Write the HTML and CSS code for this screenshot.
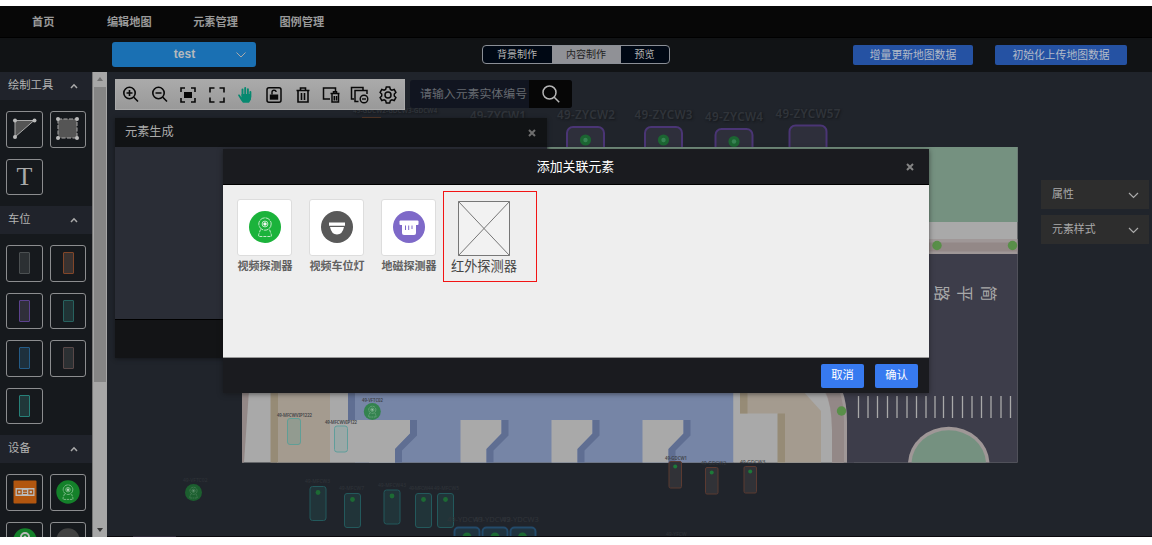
FILE: index.html
```html
<!DOCTYPE html>
<html lang="zh-CN">
<head>
<meta charset="utf-8">
<title>编辑地图</title>
<link rel="stylesheet" href="styles.css">
</head>
<body>
<svg class="defs" width="0" height="0">
  <defs>
    <g id="camera" fill="none" stroke="#e8f5e9" stroke-width=".8">
      <circle cx="0" cy="-3" r="6.200" stroke-dasharray="5 .8"/><circle cx="0" cy="-3" r="2.900"/><circle cx="0" cy="-3" r="1.300" fill="#fff"/>
      <path d="M-4.500 2.500 L-6.300 7.500 V9.500 H6.300 V7.500 L4.500 2.500" stroke-dasharray="3 1"/>
    </g>
    <g id="bay"><rect x="0" y="0" width="16" height="34" rx="2.5" fill="#213439" stroke="#23595c"/><circle cx="8" cy="6" r="2.4" fill="#1d6a34"/></g>
    <g id="bayBrown"><rect x="0" y="0" width="12.5" height="26.5" rx="1.5" fill="#313237" stroke="#5b3a31"/><circle cx="6.2" cy="5" r="2" fill="#1d7a38"/></g>
    <g id="slotPurple"><rect x="0" y="0" width="37" height="50" rx="6" fill="#2e2f3b" stroke="#4a3575" stroke-width="2"/></g>
    <g id="dot"><circle r="5.6" fill="#1c6532"/><circle r="2.2" fill="#388353"/></g>
    <g id="notch"><path d="M0 0H41V13.5L26 29V42.500H0Z" fill="#a9a9a9"/><path d="M41 0H48V15.500L33 30.500V42.500H26V29L41 13.500Z" fill="#5f6e92"/></g>
  </defs>
</svg>
<div class="app">
  <nav class="nav"><a class="home">首页</a><a>编辑地图</a><a>元素管理</a><a>图例管理</a></nav>
  <header class="subbar">
    <div class="select"><span>test</span><svg width="12" height="8" viewBox="0 0 12 8"><path d="M1.500 1.500 6 6l4.500-4.500"/></svg></div>
    <div class="tabs"><span class="tab first">背景制作</span><span class="tab active">内容制作</span><span class="tab last">预览</span></div>
    <div class="actions"><button class="update">增量更新地图数据</button><button class="upload">初始化上传地图数据</button></div>
  </header>
  <div class="workspace">
    <aside class="side">
      <h3>绘制工具<svg width="8" height="6" viewBox="0 0 8 6"><path d="M1 5 4 1.800 7 5"/></svg></h3>
      <div class="grid">
        <div class="tool"><svg width="36" height="36" viewBox="0 0 36 36"><path d="M8 9.500H27L8 26Z" fill="#555" stroke="#aaa"/><g fill="#bbb"><circle cx="8" cy="9.500" r="2"/><circle cx="27.500" cy="9.500" r="2"/><circle cx="8" cy="26" r="2"/></g></svg></div>
        <div class="tool"><svg width="36" height="36" viewBox="0 0 36 36"><rect x="8" y="8" width="19" height="19" fill="#555" stroke="#aaa" stroke-dasharray="4 1.500"/><g fill="#bbb"><circle cx="8" cy="8" r="2"/><circle cx="27" cy="8" r="2"/><circle cx="8" cy="27" r="2"/><circle cx="27" cy="27" r="2"/></g></svg></div>
        <div class="tool letter">T</div>
      </div>
      <h3>车位<svg width="8" height="6" viewBox="0 0 8 6"><path d="M1 5 4 1.800 7 5"/></svg></h3>
      <div class="grid">
        <div class="tool"><i class="slot gray"></i></div><div class="tool"><i class="slot orange"></i></div>
        <div class="tool"><i class="slot purple"></i></div><div class="tool"><i class="slot teal"></i></div>
        <div class="tool"><i class="slot azure"></i></div><div class="tool"><i class="slot brown"></i></div>
        <div class="tool"><i class="slot aqua"></i></div>
      </div>
      <h3>设备<svg width="8" height="6" viewBox="0 0 8 6"><path d="M1 5 4 1.800 7 5"/></svg></h3>
      <div class="grid">
        <div class="tool"><svg width="24" height="24" viewBox="0 0 24 24"><rect x=".5" y=".5" width="23" height="23" rx="1" fill="#b2560f"/><path fill="#bbb" d="M2.500 8h19v8h-19z"/><g fill="none" stroke="#a6500f" stroke-width="1.300"><rect x="4.500" y="10.200" width="3.600" height="3.600"/><rect x="16" y="10.200" width="3.600" height="3.600"/><path d="M10 11H14M10 13.300H14"/></g></svg></div>
        <div class="tool"><svg width="24" height="24" viewBox="-12 -12 24 24"><circle r="11.700" fill="#14812a"/><use href="#camera" transform="scale(.78)" opacity=".75"/></svg></div>
        <div class="tool"><svg width="24" height="24" viewBox="-12 -12 24 24"><circle r="11.700" fill="#14812a"/><circle cy="-3" r="4" fill="none" stroke="#bbb" stroke-width="2"/><circle cy="-3" r="1.500" fill="#bbb"/></svg></div>
        <div class="tool"><svg width="24" height="24" viewBox="-12 -12 24 24"><circle r="11.700" fill="#414141"/></svg></div>
      </div>
    </aside>
    <div class="scroll"><b class="up"></b><div class="thumb"></div><b class="down"></b></div>
    <main class="canvas">
      <svg class="map" width="1045" height="465" viewBox="107 72 1045 465">
        <g class="label shade"><text x="353" y="113" font-size="6.500">49-GDCW2-GDCW3-GDCW4</text><text x="470" y="119.500">49-ZYCW1</text><text x="557" y="119" textLength="58">49-ZYCW2</text><text x="634.500" y="119" textLength="58">49-ZYCW3</text><text x="705" y="121" textLength="58">49-ZYCW4</text><text x="775.500" y="117.500" textLength="65">49-ZYCW57</text></g>
        <path d="M362 118h19" stroke="#5d3b27" stroke-width="2"/>
        <use href="#slotPurple" x="567" y="127"/><use href="#slotPurple" x="645" y="127"/><use href="#slotPurple" x="715.500" y="129"/><use href="#slotPurple" x="789.500" y="125.500"/>
        <use href="#dot" x="585.500" y="140"/><use href="#dot" x="663.500" y="140"/><use href="#dot" x="734" y="141.500"/>
        <rect x="242" y="147" width="775.500" height="315.500" fill="#a9a9a9"/>
        <rect x="242" y="147" width="775.500" height="75" fill="#759180"/>
        <path fill="#9f9797" d="M900 239h117.500v15H900z"/><path fill="#938887" d="M900 242.500h117.500v9H900z"/>
        <path fill="#3d3d4a" d="M847 254h170.500v208.500H847z"/>
        <circle cx="937" cy="245.500" r="4.700" fill="#598f49"/><circle cx="1012.500" cy="245.500" r="4.700" fill="#598f49"/>
        <path fill="#938887" d="M242 390h7l-5 72.500h-2z"/>
        <path fill="#a49b8f" d="M277 390h53v72.500h-53z"/><path fill="#968b76" d="M270.500 390h7.500v72.500h-7.500z"/>
        <path fill="#7685a6" d="M355 390h378.500v72.500H355z"/><path fill="#a9a9a9" d="M330 390h18v30h62v13.500l-15 15.500v13.500h-65z"/><path fill="#5f6e92" d="M348 390h7v30h-7z"/>
        <use href="#notch" x="369" y="420"/><use href="#notch" x="460.500" y="420"/><use href="#notch" x="551.500" y="420"/><use href="#notch" x="642.500" y="420"/>
        <path fill="#a9a9a9" d="M733.500 390h110v72.500h-110z"/>
        <path fill="#a49b8f" d="M740 390h62l19 21v51.500h-43V413.500h-38z"/><path fill="#968b76" d="M740 390h7.500v23.500H740zM777.500 413.500h7.500v49h-7.500z"/>
        <path fill="#9f9797" d="M820 390h22q5 13 5 32v40.500h-15V430q0-25-8-40z"/><path fill="#938887" d="M825 390h14q5 13 5 32v40.500h-12V430q0-25-7-40z"/>
        <path fill="#3d3d4a" d="M842 390h12v72.500h-7V422q0-19-5-32z"/>
        <circle cx="841.500" cy="411" r="4.700" fill="#598f49"/>
        <path class="ticks" d="M858.500 396v22M868 396v22M877.500 396v22M887.500 396v22M897 396v22M907 396v22M916.500 396v22M926 396v22M935 396v22M943.500 396v22M952.500 396v22M962.500 396v22M972 396v22M981.500 396v22M991 396v22M1001 396v22M1010.500 396v22"/>
        <path d="M908 462.500a40.800 37.500 0 0 1 81.500 0" fill="#9f9797"/><path d="M911.500 462.500a37.300 34 0 0 1 74.500 0" fill="#759180"/>
        <g class="road"><text transform="translate(936 285.500) rotate(90)">路</text><text transform="translate(959 285.500) rotate(90)">平</text><text transform="translate(983 285.500) rotate(90)">简</text></g>
        <g class="label tiny"><text x="277" y="416.500" textLength="35">49-MFCWVIP1222</text><text x="325" y="423.500" textLength="32">49-MFCWVIP122</text><text x="362" y="401.500" textLength="21">49-VFTC02</text><text x="665" y="459.500" textLength="22">49-GDCW1</text></g>
        <rect x="287.500" y="418.500" width="13" height="26" rx="2.500" fill="#929b90" stroke="#609e96"/><rect x="334.500" y="426" width="13" height="26" rx="2.500" fill="#9ba8a7" stroke="#609e9b"/>
        <circle cx="372.300" cy="411.500" r="8.500" fill="#34834f"/><use href="#camera" transform="translate(372.300 411.500) scale(.58)" opacity=".55"/>
        <circle cx="193.500" cy="492.500" r="8.500" fill="#1c5f2f"/><use href="#camera" transform="translate(193.500 492.500) scale(.58)" opacity=".35"/>
        <use href="#bay" x="310" y="486.500"/><use href="#bay" x="344.500" y="493.500"/><use href="#bay" x="384" y="490"/><use href="#bay" x="415.500" y="493.500"/><use href="#bay" x="437.500" y="493.500"/>
        <use href="#bayBrown" x="669" y="461.500"/><use href="#bayBrown" x="705.500" y="467.500"/><use href="#bayBrown" x="744" y="466.500"/>
        <g class="label faint"><text x="305" y="483">49-MFCW3</text><text x="339" y="490">49-MFCW7</text><text x="378" y="486.500">49-MFCW43</text><text x="409" y="490" textLength="24">49-MFCW44</text><text x="434" y="490" textLength="25">49-MFCW5</text><text x="183" y="482">49-VFTC02</text><text x="701" y="465">49-GDCW2</text><text x="740" y="464">49-GDCW3</text><text x="666" y="536">49-YFCW</text></g>
        <g class="label ydc"><text x="447" y="521.500">49-YDCW1</text><text x="474" y="521.500">49-YDCW2</text><text x="502" y="521.500">49-YDCW3</text></g>
        <g fill="#20333f" stroke="#234b6b" stroke-width="2"><rect x="454.500" y="527.500" width="25" height="30" rx="4"/><rect x="482.500" y="527.500" width="25" height="30" rx="4"/><rect x="510.500" y="527.500" width="25" height="30" rx="4"/></g>
        <g fill="#1d6a34"><circle cx="467" cy="537" r="4.500"/><circle cx="495" cy="537" r="4.500"/><circle cx="522.500" cy="537" r="4.500"/></g>
        <path d="M107 536.500H1152" stroke="#0a080c"/><path d="M133 536.500h43" stroke="#302938"/>
      </svg>
      <div class="top-tools">
        <div class="toolbar">
          <svg viewBox="0 0 20 20"><circle cx="8.500" cy="8" r="5.700"/><path d="M12.800 12.200 17 16.500M5.500 8h6M8.500 5v6"/></svg>
          <svg viewBox="0 0 20 20"><circle cx="8.500" cy="8" r="5.700"/><path d="M12.800 12.200 17 16.500M5.500 8h6"/></svg>
          <svg viewBox="0 0 20 20"><path d="M7 3H3v4M13 3h4v4M3 13v4h4M17 13v4h-4"/><path class="solid" d="M6 7h8v6H6z"/></svg>
          <svg viewBox="0 0 20 20"><path d="M7.500 3H3v4.500M12.500 3H17v4.500M3 12.500V17h4.500M17 12.500V17h-4.500"/></svg>
          <svg class="hand" viewBox="0 0 20 20"><path d="M7.500 11V4.500M10.200 10V3M12.900 11V4.200M15.400 12V7"/><path class="palm" d="M6.500 9V12.500L4.700 9.800C4 9 2.700 9.600 3.300 10.800L6.200 15.500 8 17.800H14L16 14.500V9Z"/></svg>
          <svg viewBox="0 0 20 20"><rect x="3" y="2.800" width="14" height="14.500" rx="2" stroke-width="1.500"/><path class="solid" d="M5.800 9.500h8.400v5.200H5.800z"/><path d="M8 9.500V7.200q0-2 2-2t2.200 1.800" stroke-width="1.400"/></svg>
          <svg viewBox="0 0 20 20"><path d="M3.500 5.500h13M7.500 5V3h5v2M5 6v11h10V6M8.500 8v7M11.500 8v7"/></svg>
          <svg viewBox="0 0 20 20"><path d="M9 14H2.500V3h12v3M9.500 8.500h9M12.500 8V6.800h3V8M11 9v8h6.500V9M13.300 11v4.500M15.500 11v4.500" stroke-width="1.500"/></svg>
          <svg viewBox="0 0 20 20"><path d="M4 14H1.500V2.500H13V5M8.500 16.500H5V5.500h12V9" stroke-width="1.500"/><circle cx="14" cy="14" r="3.800" stroke-width="1.400"/><path d="M12 14h4" stroke-width="1.400"/></svg>
          <svg viewBox="0 0 20 20"><path d="M8.300 2h3.400l.7 2.400 1.500.8 2.300-.7 1.700 2.900-1.600 1.700v1.800l1.600 1.700-1.700 2.900-2.300-.7-1.500.8-.7 2.400H8.300l-.7-2.400-1.500-.8-2.300.7-1.700-2.900 1.600-1.700V9.100L2.100 7.400l1.700-2.900 2.300.7 1.500-.8Z" stroke-width="1.500"/><circle cx="10" cy="10" r="3" stroke-width="1.500"/></svg>
        </div>
        <div class="search"><span>请输入元素实体编号</span><div class="go"><svg width="20" height="20" viewBox="0 0 20 20"><circle cx="8.500" cy="8.500" r="6.500"/><path d="m13.200 13.200 5 5"/></svg></div></div>
      </div>
      <section class="panel"><div class="panel-head"><span>元素生成</span><svg width="8" height="8" viewBox="0 0 8 8"><path d="m1 1 6 6M7 1 1 7"/></svg></div><div class="panel-body"></div><div class="panel-foot"></div></section>
      <div class="props"><div>属性<svg width="11" height="7" viewBox="0 0 11 7"><path d="m1 1 4.500 4.500L10 1"/></svg></div><div>元素样式<svg width="11" height="7" viewBox="0 0 11 7"><path d="m1 1 4.500 4.500L10 1"/></svg></div></div>
    </main>
  </div>
  <section class="dialog">
    <div class="dialog-head"><span>添加关联元素</span><svg width="8" height="8" viewBox="0 0 8 8"><path d="m1 1 6 6M7 1 1 7"/></svg></div>
    <div class="dialog-body">
      <div class="item"><div class="card"><svg width="32" height="32" viewBox="-16 -16 32 32"><circle r="16" fill="#1bb33b"/><use href="#camera"/></svg></div><span>视频探测器</span></div>
      <div class="item"><div class="card"><svg width="32" height="32" viewBox="-16 -16 32 32"><circle r="16" fill="#595959"/><path fill="#fff" d="M-8-4.500H8V-1.200H-8ZM-7 0H7Q5.500 7.500 0 7.500-5.500 7.500-7 0Z"/></svg></div><span>视频车位灯</span></div>
      <div class="item"><div class="card"><svg width="32" height="32" viewBox="-16 -16 32 32"><circle r="16" fill="#7e69c8"/><rect x="-9.500" y="-6.500" width="19" height="4.500" rx="1" fill="#fff"/><path fill="#fff" d="M-7-2.200H7V6q0 2-2 2H-5q-2 0-2-2Z"/><path d="M-3.500-1.500V3M-.3-1.500V3M3-1.500V2" stroke="#7e69c8"/></svg></div><span>地磁探测器</span></div>
      <div class="missing"><svg width="52" height="55" viewBox="0 0 52 55"><path d="M.5.500h51v54H.500ZM.500.500l51 54M51.500.500l-51 54"/></svg><span>红外探测器</span></div>
    </div>
    <div class="dialog-foot"><button>取消</button><button>确认</button></div>
  </section>
</div>
</body>
</html>
```
FILE: styles.css
```css
* { box-sizing: border-box; }
body { margin: 0; padding-top: 6px; height: 545px; overflow: hidden; background: #fff; font: 11px/1.2 "Liberation Sans", "Noto Sans CJK SC", sans-serif; color: #aaa; }
svg { display: block; flex: none; }
.defs { position: absolute; }
button { border: 0; padding: 1px 0 0; font: inherit; }
.app { position: relative; height: 531px; overflow: hidden; background: #20242b; }
.nav { height: 32px; display: flex; align-items: center; gap: 41.5px; padding: 2px 0 0 32px; background: #070707; border-bottom: 1px solid #000; font-weight: 700; font-size: 11.2px; color: #999; }
.home { margin-right: 11px; }
.subbar { height: 34px; display: flex; align-items: center; padding: 0 25px 1px 112px; background: #111315; }
.select { width: 144px; height: 25px; display: flex; align-items: center; background: #1a70b3; border-radius: 3px; font-size: 12px; font-weight: 700; color: #b4b9bd; padding-right: 9px; }
.select span { flex: 1; text-align: center; padding-left: 22px; }
.select svg, .side h3 svg, .props svg, .panel-head svg, .dialog-head svg { fill: none; stroke: #aaa; stroke-width: 1.2; }
.select svg { stroke-width: 1; }
.tabs { display: flex; margin-left: 225.5px; width: 188px; height: 19px; border: 1px solid #8b8f96; border-radius: 4px; overflow: hidden; font-size: 10px; line-height: 18px; background: #000814; color: #b4b4b4; text-align: center; }
.tab { width: 69px; }
.tab.active { background: #909196; color: #222; }
.tab.last { flex: 1; }
.actions { display: flex; gap: 22px; margin-left: auto; }
.actions button { height: 20px; border-radius: 2px; background: #2552a3; color: #b2bac8; font-size: 10.800px; }
.update { width: 120px; }
.upload { width: 132px; }
.workspace { height: 465px; display: flex; overflow: hidden; }
.side { width: 92px; background: #16191d; flex: none; }
.side h3 { margin: 0; height: 28px; padding: 0 14px 0 8px; display: flex; align-items: center; justify-content: space-between; background: #20232b; font-size: 11.300px; font-weight: 400; color: #b3b3b3; }
.side h3 svg { stroke-width: 1.500; }
.grid { display: grid; grid-template-columns: 37px 36px; grid-auto-rows: 36.500px; gap: 11px 7px; padding: 11px 6px; }
.tool { display: flex; align-items: center; justify-content: center; border: 1px solid #8c8d8f; border-radius: 3px; overflow: hidden; }
.letter { font: 26px "Liberation Serif", serif; color: #aaa; }
.slot { width: 11px; height: 22px; border: 1px solid; border-radius: 1px; background: #2c3033; }
.gray { border-color: #4c5052; }
.orange { border-color: #824629; background: #3a3230; }
.purple { border-color: #5c428e; background: #302f3a; }
.teal { border-color: #27625f; background: #203436; }
.azure { border-color: #245b87; background: #1e303d; }
.brown { border-color: #594848; }
.aqua { border-color: #278078; background: #203739; }
.scroll { width: 15px; flex: none; background: #a7a7a7; border-left: 1px solid #777; display: flex; flex-direction: column; align-items: center; padding: 5px 0; }
.up, .down { border: 3.500px solid transparent; height: 4px; }
.up { border-top: 0; border-bottom: 4px solid #707070; margin-bottom: 6px; }
.down { border-bottom: 0; border-top: 4px solid #373737; margin-top: auto; }
.thumb { width: 12px; height: 295px; background: #858585; }
.canvas { position: relative; flex: 1; padding: 7px 0 0 8px; }
.map { position: absolute; left: 0; top: 0; }
.label { font-family: "Noto Sans", sans-serif; fill: #30343a; }
.shade { font-size: 11.700px; font-weight: 600; }
.shade text { text-shadow: 1px 1px 2px #15181c; }
.tiny { font-size: 4.300px; font-weight: 600; fill: #404246; }
.faint { font-size: 5px; fill: #30343a; }
.ydc { font-size: 7.500px; }
.ticks { stroke: #a9a9a9; stroke-width: 1.300; }
.road { font: 16px "Noto Sans CJK SC", sans-serif; fill: #a9a9a9; }
.top-tools { position: relative; display: flex; align-items: flex-start; gap: 5.500px; }
.toolbar { width: 289.500px; height: 31px; display: flex; align-items: center; justify-content: space-between; padding: 0 5px; background: linear-gradient(#aaa, #999); border: 1px solid #aaa; }
.toolbar svg { width: 20px; height: 20px; fill: none; stroke: #080808; stroke-width: 1.600; }
.toolbar .solid { fill: #080808; stroke: none; }
.toolbar .hand { stroke: #078970; stroke-width: 1.900; stroke-linecap: round; }
.hand .palm { fill: #078970; stroke: none; }
.search { display: flex; width: 162px; height: 28px; margin-top: 1px; background: #111520; border-radius: 3px; overflow: hidden; }
.search span { width: 119px; padding-left: 10px; font-size: 11.900px; line-height: 29px; color: #666a70; white-space: nowrap; }
.go { width: 43px; display: flex; align-items: center; justify-content: center; background: #060606; fill: none; stroke: #b5b5b5; stroke-width: 1.500; }
.panel { position: relative; margin-top: 8px; width: 432px; height: 240px; display: flex; flex-direction: column; box-shadow: 0 1px 4px #14171b; }
.panel-head { height: 29px; display: flex; align-items: center; justify-content: space-between; padding: 0 11px 0 10px; background: #111315; font-size: 12.200px; }
.panel-head svg, .dialog-head svg { stroke: #858585; stroke-width: 2; }
.panel-head svg { stroke: #6e6e6e; }
.panel-body { flex: 1; background: #2a2d36; }
.panel-foot { height: 39px; background: #131416; border-top: 1px solid #000; }
.props { position: absolute; right: 3px; top: 108px; width: 108px; display: grid; gap: 6px; }
.props div { height: 29px; display: flex; align-items: center; justify-content: space-between; padding: 1px 10px 0 11px; background: #2d2d2d; font-size: 10.900px; }
.dialog { position: absolute; left: 223px; top: 143px; width: 706px; height: 244px; display: flex; flex-direction: column; background: #1a1b1f; box-shadow: 0 1px 5px #1118; }
.dialog-head { height: 36px; display: flex; align-items: center; padding: 0 15px 0 22px; border-bottom: 1px solid #000; font-size: 12.900px; color: #fff; }
.dialog-head span { flex: 1; text-align: center; }
.dialog-body { height: 173px; padding: 6px 14px; display: flex; gap: 17px; background: #eee; border-bottom: 1px solid #999; }
.item { width: 55px; padding-top: 8px; display: flex; flex-direction: column; align-items: center; font-size: 11px; font-weight: 700; color: #606060; white-space: nowrap; }
.item span { padding-left: 1px; }
.card { width: 55px; height: 57px; padding-bottom: 1px; display: flex; align-items: center; justify-content: center; background: #fff; border: 1px solid #ddd; border-radius: 3px; margin-bottom: 4px; }
.missing { width: 94px; height: 91px; margin-left: -10px; padding: 10px 8px 0 7px; border: 1px solid #f21414; font-size: 13.200px; color: #444; display: flex; flex-direction: column; white-space: nowrap; }
.missing svg { margin: -1px 0 3px 7px; fill: #f2f2f2; stroke: #777; }
.dialog-foot { flex: 1; display: flex; align-items: center; justify-content: flex-end; gap: 11px; padding-right: 11px; }
.dialog-foot button { width: 43px; height: 24px; border-radius: 2px; background: #377af0; color: #fff; font-size: 11.300px; }
```
